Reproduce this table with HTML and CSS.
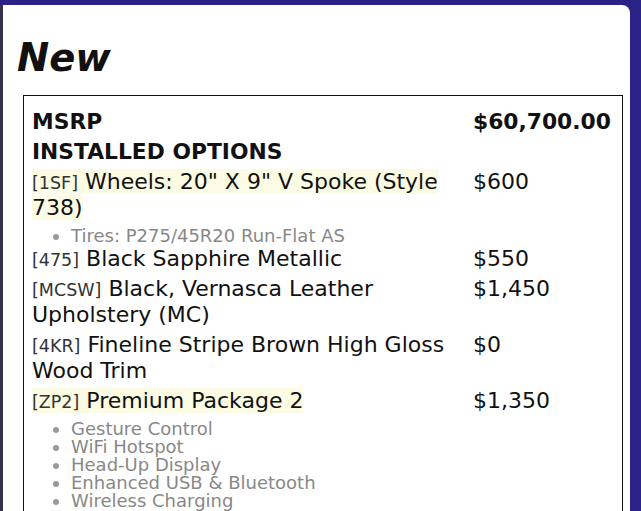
FILE: index.html
```html
<!DOCTYPE html>
<html>
<head>
<meta charset="utf-8">
<link rel="stylesheet" href="styles.css">
</head>
<body>
<div class="card">
  <h1 class="title">New</h1>
  <div class="box">
    <table class="opts">
      <tr><th class="desc">MSRP</th><th class="price">$60,700.00</th></tr>
      <tr><th class="desc" colspan="2">INSTALLED OPTIONS</th></tr>
      <tr>
        <td class="desc"><span class="hl"><span class="code">[1SF]</span> Wheels: 20" X 9" V Spoke (Style 738)</span>
          <ul class="sub"><li>Tires: P275/45R20 Run-Flat AS</li></ul></td>
        <td class="price">$600</td>
      </tr>
      <tr><td class="desc"><span class="code">[475]</span> Black Sapphire Metallic</td><td class="price">$550</td></tr>
      <tr><td class="desc"><span class="code">[MCSW]</span> Black, Vernasca Leather Upholstery (MC)</td><td class="price">$1,450</td></tr>
      <tr><td class="desc"><span class="code">[4KR]</span> Fineline Stripe Brown High Gloss Wood Trim</td><td class="price">$0</td></tr>
      <tr>
        <td class="desc"><span class="hl"><span class="code">[ZP2]</span> Premium Package 2</span>
          <ul class="sub">
            <li>Gesture Control</li>
            <li>WiFi Hotspot</li>
            <li>Head-Up Display</li>
            <li>Enhanced USB &amp; Bluetooth</li>
            <li>Wireless Charging</li>
          </ul></td>
        <td class="price">$1,350</td>
      </tr>
    </table>
  </div>
</div>
</body>
</html>
```
FILE: styles.css
```css
html, body {
  margin: 0;
  padding: 0;
  background: #2a2287;
}
body {
  padding-top: 5px;
  font-family: "DejaVu Sans", sans-serif;
  color: #111;
}
.card {
  background: #fff;
  width: 630px;
  border-left: 3px solid #33324a;
  border-radius: 0 8px 0 0;
  padding: 30px 0 20px 0;
  min-height: 600px;
  box-sizing: border-box;
}
.title {
  margin: 0 0 15px 14px;
  font-size: 38.5px;
  font-weight: bold;
  font-style: italic;
  line-height: 45px;
  color: #111;
}
.box {
  margin-left: 20px;
  width: 600px;
  border: 1px solid #111;
  box-sizing: border-box;
  padding: 10px 8px 8px 8px;
}
.opts {
  border-collapse: separate;
  border-spacing: 0 2px;
  font-size: 22px;
  width: 100%;
}
.opts th, .opts td {
  padding: 1px 0;
  text-align: left;
  vertical-align: top;
  line-height: 26px;
}
.opts th {
  font-size: 21.8px;
}
.desc {
  width: 441px;
}
.hl {
  background: #fcfbe3;
}
.code {
  font-size: 17.5px;
  line-height: 1;
  color: #333;
}
.sub {
  margin: 6px 0 -3px 0;
  padding-left: 39px;
  font-size: 18px;
  line-height: 18px;
  color: #888;
}
.sub li::marker {
  color: #999;
}
```
